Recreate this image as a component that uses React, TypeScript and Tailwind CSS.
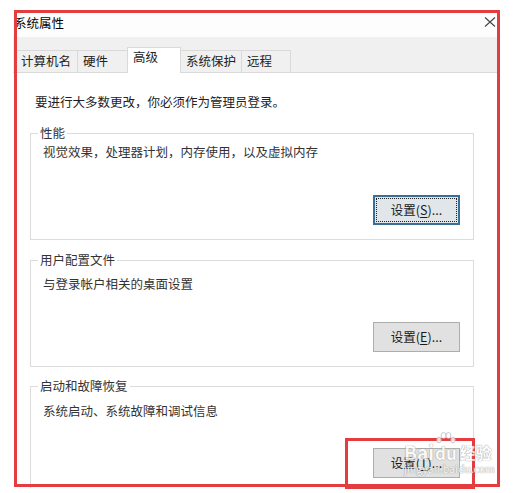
import React from 'react';

const FONT = "font-['Noto_Sans_CJK_SC','Microsoft_YaHei',sans-serif]";

interface TabProps {
  label: string;
  width: string;
  active?: boolean;
  first?: boolean;
}

const Tab: React.FC<TabProps> = ({ label, width, active, first }) => {
  if (active) {
    return (
      <div
        className={`${width} ${first ? '' : '-ml-px'} relative z-10 -mb-px h-[26px] border border-b-0 border-[#d9d9d9] bg-white pl-[5px] pt-0 text-[12.5px] leading-[18px] text-[#222]`}
      >
        {label}
      </div>
    );
  }
  return (
    <div
      className={`${width} ${first ? '' : '-ml-px'} h-[22px] border border-b-0 border-[#d9d9d9] bg-[#f0f0f0] pl-[5px] text-[12.5px] leading-[20px] text-[#222]`}
    >
      {label}
    </div>
  );
};

interface SettingsButtonProps {
  hotkey: string;
  focused?: boolean;
}

const SettingsButton: React.FC<SettingsButtonProps> = ({ hotkey, focused }) => {
  const label = (
    <span className="text-[12.5px] leading-none text-[#1a1a1a]">
      设置(<span className="underline underline-offset-2">{hotkey}</span>)...
    </span>
  );
  if (focused) {
    return (
      <button className="mt-auto mb-[14px] mr-[13px] flex h-[30px] w-[87px] items-center justify-center self-end border-2 border-[#3a6f98] bg-[#e1e6ea] p-[1px]">
        <span className="flex h-full w-full items-center justify-center border border-dotted border-[#222]">
          {label}
        </span>
      </button>
    );
  }
  return (
    <button className="mt-auto mb-[14px] mr-[13px] flex h-[30px] w-[87px] items-center justify-center self-end border border-[#adadad] bg-[#e1e1e1]">
      {label}
    </button>
  );
};

interface GroupProps {
  title: string;
  text: string;
  hotkey: string;
  focused?: boolean;
  className?: string;
  textPad?: string;
}

const Group: React.FC<GroupProps> = ({ title, text, hotkey, focused, className, textPad }) => (
  <div className={`relative flex h-[107px] flex-col border border-[#dcdcdc] ${className ?? ''}`}>
    <span className="absolute left-[7px] -top-[10px] bg-white px-[2px] text-[12.5px] leading-[18px] text-[#333]">
      {title}
    </span>
    <p className={`pl-[12px] ${textPad ?? 'pt-[9px]'} text-[12.5px] leading-[18px] text-[#333]`}>{text}</p>
    <SettingsButton hotkey={hotkey} focused={focused} />
  </div>
);

const Watermark: React.FC = () => (
  <div className="pointer-events-none absolute left-[404px] top-[432px] flex flex-col items-start opacity-80">
    <div className="flex items-end">
      <span className="text-[19px] font-bold leading-[20px] text-white [text-shadow:0_0_1px_#8a8a8a,0_0_1px_#8a8a8a]">
        Bai
      </span>
      <span className="relative ml-[1px] flex flex-col items-center">
        <svg width="20" height="13" viewBox="0 0 20 13" className="-mb-[1px]">
          <g fill="#ffffff" stroke="#a9a9a9" strokeWidth="0.8">
            <ellipse cx="3" cy="8" rx="2.3" ry="2.8" />
            <ellipse cx="7.5" cy="3.5" rx="2.4" ry="3" />
            <ellipse cx="12.5" cy="3.5" rx="2.4" ry="3" />
            <ellipse cx="17" cy="8" rx="2.3" ry="2.8" />
          </g>
        </svg>
        <span className="text-[17px] font-bold leading-[18px] text-white [text-shadow:0_0_1px_#8a8a8a,0_0_1px_#8a8a8a]">
          du
        </span>
      </span>
      <span className="ml-[3px] text-[16px] font-bold leading-[20px] text-white [text-shadow:0_0_1px_#8a8a8a,0_0_1px_#8a8a8a]">
        经验
      </span>
    </div>
    <span className="mt-[1px] text-[10.5px] leading-[12px] text-white [text-shadow:0_0_1px_#8a8a8a,0_0_1px_#8a8a8a]">
      jingyan.baidu.com
    </span>
  </div>
);

export default function App() {
  return (
    <div className={`relative h-[493px] w-[527px] overflow-hidden bg-white pl-[13px] pt-[13px] ${FONT}`}>
      {/* dialog */}
      <div className="flex h-[475px] w-[484px] flex-col overflow-hidden bg-white">
        {/* title bar */}
        <div className="relative h-[24px] shrink-0 bg-[#fdfdfd] pt-[2px]">
          <span className="block pl-[1px] text-[12.5px] leading-[16px] text-black">系统属性</span>
          <svg className="absolute left-[471px] top-[4px]" width="12" height="10" viewBox="0 0 12 10">
            <path d="M1 0.5 L11 9.5 M11 0.5 L1 9.5" stroke="#444" strokeWidth="1.1" fill="none" />
          </svg>
        </div>

        {/* tabs */}
        <div className="flex h-[36px] shrink-0 items-end border-b border-[#d9d9d9] bg-[#f0f0f0] pl-[2px]">
          <Tab label="计算机名" width="w-[63px]" first />
          <Tab label="硬件" width="w-[51px]" />
          <Tab label="高级" width="w-[54px]" active />
          <Tab label="系统保护" width="w-[62px]" />
          <Tab label="远程" width="w-[50px]" />
        </div>

        {/* content */}
        <div className="flex flex-1 flex-col bg-white pl-[17px] pr-[23px]">
          <p className="ml-[5px] mt-[20px] text-[12.5px] leading-[18px] text-[#222]">
            要进行大多数更改，你必须作为管理员登录。
          </p>
          <Group
            className="mt-[22px]"
            title="性能"
            text="视觉效果，处理器计划，内存使用，以及虚拟内存"
            hotkey="S"
            focused
          />
          <Group
            className="mt-[20px]"
            textPad="pt-[14px]"
            title="用户配置文件"
            text="与登录帐户相关的桌面设置"
            hotkey="E"
          />
          <Group
            className="mt-[19px]"
            textPad="pt-[15px]"
            title="启动和故障恢复"
            text="系统启动、系统故障和调试信息"
            hotkey="T"
          />
        </div>
      </div>

      {/* annotation frames */}
      <div className="pointer-events-none absolute left-[14px] top-[10px] h-[477px] w-[486px] border-[3px] border-[#e43c3f]" />
      <div className="pointer-events-none absolute left-[345px] top-[438px] h-[51px] w-[130px] border-[3px] border-[#e43c3f]" />

      <Watermark />
    </div>
  );
}
